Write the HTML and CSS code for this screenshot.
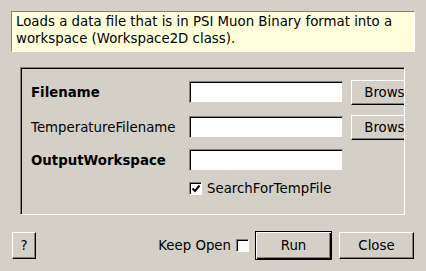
FILE: index.html
```html
<!DOCTYPE html>
<html lang="en">
<head>
    <meta charset="UTF-8">
    <title>LoadPSIMuonBin</title>
    <link rel="stylesheet" href="styles.css">
</head>
<body>
    <div class="dialog">
        <div class="desc">Loads a data file that is in PSI Muon Binary format into a workspace (Workspace2D class).</div>

        <div class="group">
            <div class="row first">
                <span class="label bold">Filename</span>
                <span class="field"></span>
                <span class="btn browse">Browse</span>
            </div>
            <div class="row second">
                <span class="label">TemperatureFilename</span>
                <span class="field"></span>
                <span class="btn browse">Browse</span>
            </div>
            <div class="row third">
                <span class="label bold">OutputWorkspace</span>
                <span class="field"></span>
            </div>
            <div class="check-row">
                <span class="box">
                    <svg width="10" height="10" viewBox="0 0 10 10"><path d="M1.5 4.5 L4 7 L8.5 1.5" fill="none" stroke="#000" stroke-width="2"/></svg>
                </span>
                <span>SearchForTempFile</span>
            </div>
        </div>

        <div class="footer">
            <span class="btn help">?</span>
            <span class="keep">Keep Open</span>
            <span class="box"></span>
            <span class="btn run">Run</span>
            <span class="btn close">Close</span>
        </div>
    </div>
</body>
</html>
```

FILE: styles.css
```css
html, body {
    margin: 0;
    padding: 0;
}
body {
    background-color: #d4d0c8;
    font-family: 'DejaVu Sans', sans-serif;
    font-size: 13.33px;
    color: #000;
    width: 426px;
    height: 271px;
    overflow: hidden;
}
.dialog {
    padding-top: 11px;
}
.desc {
    margin-left: 11px;
    width: 398px;
    height: 38px;
    padding: 1px 0 0 4px;
    background-color: #ffffdc;
    border-top: 1px solid #808080;
    border-left: 1px solid #808080;
    border-right: 1px solid #ffffff;
    border-bottom: 1px solid #ffffff;
    line-height: 17px;
}
.group {
    margin: 15px 0 0 20px;
    width: 383px;
    height: 146px;
    border-top: 1px solid #808080;
    border-left: 1px solid #808080;
    border-right: 1px solid #ffffff;
    border-bottom: 1px solid #ffffff;
    box-shadow: inset 1px 1px 0 #000;
    overflow: hidden;
}
.row {
    display: flex;
    align-items: center;
    height: 24px;
    padding-left: 10px;
}
.row.first {
    margin-top: 12px;
}
.row.second {
    margin-top: 11px;
}
.row.third {
    margin-top: 9px;
}
.label {
    flex: none;
    width: 158px;
}
.bold {
    font-weight: bold;
}
.field {
    display: block;
    flex: none;
    width: 150px;
    height: 18px;
    background-color: #fff;
    border-top: 1px solid #808080;
    border-left: 1px solid #808080;
    border-right: 1px solid #d4d0c8;
    border-bottom: 1px solid #d4d0c8;
    box-shadow: inset 1px 1px 0 #000, inset -1px -1px 0 #fff;
    padding: 1px;
}
.btn {
    display: flex;
    align-items: center;
    justify-content: center;
    box-sizing: border-box;
    border-top: 1px solid #fff;
    border-left: 1px solid #fff;
    border-right: 1px solid #000;
    border-bottom: 1px solid #000;
    box-shadow: inset -1px -1px 0 #808080;
}
.browse {
    flex: none;
    width: 75px;
    height: 25px;
    margin-left: 8px;
}
.check-row {
    display: flex;
    align-items: center;
    margin: 9px 0 0 168px;
    gap: 5px;
}
.box {
    display: flex;
    align-items: center;
    justify-content: center;
    box-sizing: border-box;
    width: 13px;
    height: 13px;
    background-color: #fff;
    border-top: 1px solid #808080;
    border-left: 1px solid #808080;
    border-right: 1px solid #fff;
    border-bottom: 1px solid #fff;
    box-shadow: inset 1px 1px 0 #000;
}
.footer {
    display: flex;
    align-items: center;
    margin-top: 16px;
    padding-left: 12px;
    height: 29px;
}
.help {
    width: 24px;
    height: 27px;
}
.keep {
    margin-left: auto;
    margin-right: 5px;
}
.run {
    width: 77px;
    height: 29px;
    margin-left: 6px;
    border: 1px solid #000;
    box-shadow: inset 1px 1px 0 #fff, inset -1px -1px 0 #000, inset -2px -2px 0 #808080;
}
.close {
    width: 75px;
    height: 27px;
    margin-left: 7px;
    margin-right: 12px;
}
```
